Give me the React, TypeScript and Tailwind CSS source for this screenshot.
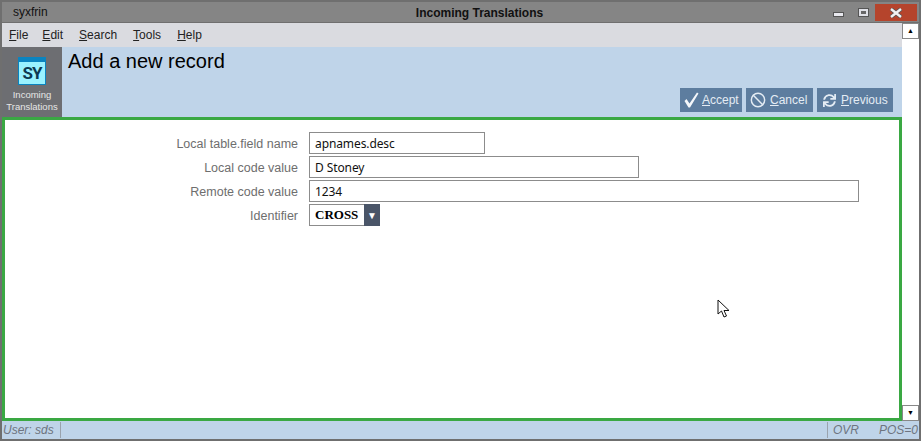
import { Ban } from 'lucide-react';
import { FaSync } from 'react-icons/fa';

const MENU = [
  { key: 'F', rest: 'ile', cls: 'mr-[-2px]' },
  { key: 'E', rest: 'dit', cls: '' },
  { key: 'S', rest: 'earch', cls: '' },
  { key: 'T', rest: 'ools', cls: '' },
  { key: 'H', rest: 'elp', cls: '' },
];

function Field({ label, value, width }: { label: string; value: string; width: string }) {
  return (
    <div className="flex items-center h-[24px]">
      <label className="w-[293px] pt-[2px] text-right text-[12.5px] text-[#6e6e6e]">{label}</label>
      <div
        className={`ml-[11px] h-[22px] ${width} border border-[#8c8c8c] bg-white pl-[5px] text-[12px] leading-[22px] tracking-[-0.1px] text-[#111] font-['Noto_Sans',sans-serif]`}
      >
        {value}
      </div>
    </div>
  );
}

function ActionButton({
  icon,
  hot,
  rest,
  width,
  pad,
  gap,
}: {
  icon: React.ReactNode;
  hot: string;
  rest: string;
  width: string;
  pad: string;
  gap: string;
}) {
  return (
    <div className={`flex items-center h-[24px] ${width} ${pad} ${gap} bg-[#5d7d9f] text-[12px] text-[#e4ecf4]`}>
      {icon}
      <span>
        <span className="underline">{hot}</span>
        {rest}
      </span>
    </div>
  );
}

export default function App() {
  return (
    <div className="relative w-[921px] h-[441px] overflow-hidden bg-[#858585] border-2 border-[#6f6f6f] font-['Liberation_Sans',Arial,sans-serif]">
      {/* Title bar */}
      <div className="relative flex items-center h-[20px] pl-[11px] text-[12px] text-[#111]">
        syxfrin
        <div className="absolute inset-x-0 top-0 h-[20px] pl-[38px] leading-[22px] text-center font-bold text-[12px] text-[#111]">
          Incoming Translations
        </div>
        <div className="absolute right-[2px] top-[2px] flex items-start">
          <div className="mt-[8px] w-[11px] h-[5px] bg-[#e8e8ee] border border-[#555]" />
          <div className="ml-[14px] mt-[4px] flex items-center justify-center w-[11px] h-[9px] bg-[#dfe0e6] border border-[#555]">
            <div className="w-[5px] h-[3px] bg-[#666]" />
          </div>
          <div className="ml-[6px] flex items-center justify-center w-[42px] h-[17px] bg-[#b5442c]">
            <svg width="14" height="10" viewBox="0 0 14 10">
              <path d="M2 1 L12 9 M12 1 L2 9" stroke="#555" strokeWidth="4" />
              <path d="M2 1 L12 9 M12 1 L2 9" stroke="#f2f2f2" strokeWidth="2.4" />
            </svg>
          </div>
        </div>
      </div>
      <div className="h-[1px] bg-[#6f6f6f]" />

      <div className="flex h-[416px]">
        <div className="flex flex-col w-[900px]">
          {/* Menu */}
          <div className="flex items-center h-[24px] bg-[#dadbe0] pl-[7px] gap-[16px] text-[12px] text-[#222]">
            {MENU.map((m) => (
              <span key={m.key} className={m.cls}>
                <span className="underline">{m.key}</span>
                {m.rest}
              </span>
            ))}
          </div>

          {/* Header */}
          <div className="flex h-[70px] bg-[#bfd4e9]">
            <div className="flex flex-col items-center w-[60px] bg-[#6d6e72] pt-[10px] text-[9.5px] leading-[12px] text-[#e6e6e6]">
              <div className="w-[28px] h-[28px] border border-[#0a84c0] border-t-[5px] bg-[#99f2ff] text-center text-[17px] leading-[22px] font-bold text-[#0d3a52] font-['Roboto',sans-serif] tracking-[-1px]">
                SY
              </div>
              <div className="mt-[4px] text-center">
                Incoming
                <br />
                Translations
              </div>
            </div>
            <div className="relative flex-1">
              <div className="pl-[6px] pt-[2px] text-[20px] leading-[24px] text-black">Add a new record</div>
              <div className="absolute right-[9px] bottom-[5px] flex gap-[4px]">
                <ActionButton
                  icon={
                    <svg width="15" height="16" viewBox="0 0 15 16">
                      <path d="M0.5 9 L2.5 7 L5.5 11.5 L13 0.5 L14.5 1.5 L6 15.5 L4.5 15.5 Z" fill="#f4f7fa" />
                    </svg>
                  }
                  hot="A"
                  rest="ccept"
                  width="w-[62px]"
                  pad="pl-[4px]"
                  gap="gap-[3px]"
                />
                <ActionButton
                  icon={<Ban size={16} strokeWidth={2.2} />}
                  hot="C"
                  rest="ancel"
                  width="w-[67px]"
                  pad="pl-[4px]"
                  gap="gap-[4px]"
                />
                <ActionButton
                  icon={<FaSync size={13} />}
                  hot="P"
                  rest="revious"
                  width="w-[76px]"
                  pad="pl-[6px]"
                  gap="gap-[5px]"
                />
              </div>
            </div>
          </div>

          {/* Form */}
          <div className="flex-1 bg-white border-[3px] border-[#3aa843] pt-[11px]">
            <div className="flex flex-col">
              <Field label="Local table.field name" value="apnames.desc" width="w-[176px]" />
              <Field label="Local code value" value="D Stoney" width="w-[330px]" />
              <Field label="Remote code value" value="1234" width="w-[550px]" />
              <div className="flex items-center h-[24px]">
                <label className="w-[293px] pt-[2px] text-right text-[12.5px] text-[#6e6e6e]">Identifier</label>
                <div className="ml-[11px] flex h-[22px] w-[71px] border border-[#8c8c8c] bg-white">
                  <div className="flex-1 pl-[5px] text-[13px] leading-[20px] font-bold text-black font-['Liberation_Serif',serif]">
                    CROSS
                  </div>
                  <div className="flex items-center justify-center w-[16px] -my-px -mr-px bg-[#4a5568] text-[10px] text-white">
                    ▼
                  </div>
                </div>
              </div>
            </div>
          </div>

          {/* Status bar */}
          <div className="flex items-center h-[18px] bg-[#bfd4e9] text-[12px] italic text-[#6e7480]">
            <span className="pl-[1px] pr-[6px] border-r border-[#9aa3ad] leading-[16px]">User: sds</span>
          </div>
        </div>

        {/* Scrollbar */}
        <div className="relative flex flex-col justify-between w-[17px] bg-white">
          <div className="flex items-center justify-center h-[16px] border border-[#888] text-[7px] text-black">▲</div>
          <div className="flex items-center justify-center h-[16px] mb-[18px] border border-[#888] text-[7px] text-black">▼</div>
          <div className="absolute left-0 right-0 bottom-0 h-[18px] bg-[#bfd4e9]" />
        </div>
      </div>

      {/* Status bar right side */}
      <div className="absolute right-0 bottom-0 flex items-center h-[18px] text-[12px] italic text-[#6e7480]">
        <span className="pl-[5px] border-l border-[#9aa3ad] leading-[16px] w-[52px]">OVR</span>
        <span className="pr-[1px]">POS=0</span>
      </div>

      {/* Mouse pointer */}
      <svg className="absolute left-[715px] top-[297px]" width="14" height="21" viewBox="0 0 14 21">
        <path d="M1 1 L1 15 L4.5 12 L7 18 L9.5 17 L7 11.5 L12 11.5 Z" fill="white" stroke="#111" strokeWidth="1" />
      </svg>
    </div>
  );
}
